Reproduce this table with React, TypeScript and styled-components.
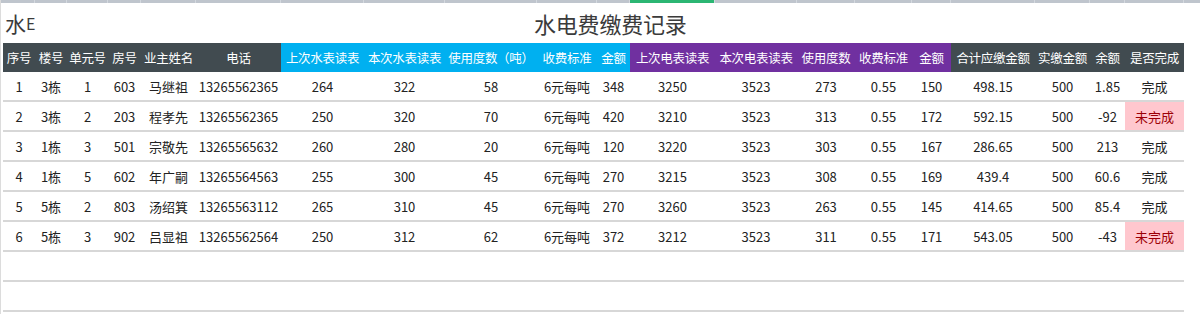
import React from 'react';
import styled, {createGlobalStyle} from 'styled-components';

type Tone = 'dark' | 'blue' | 'purple';

const colWidths = [32, 32, 41, 33, 55, 85, 83, 81, 92, 60, 33, 85, 82, 58, 57, 39, 84, 55, 35, 59];
const gridTemplate = colWidths.map(w => `${w}px`).join(' ');

const headers: [string, Tone][] = [
    ['序号', 'dark'], ['楼号', 'dark'], ['单元号', 'dark'], ['房号', 'dark'], ['业主姓名', 'dark'], ['电话', 'dark'],
    ['上次水表读表', 'blue'], ['本次水表读表', 'blue'], ['使用度数（吨）', 'blue'], ['收费标准', 'blue'], ['金额', 'blue'],
    ['上次电表读表', 'purple'], ['本次电表读表', 'purple'], ['使用度数', 'purple'], ['收费标准', 'purple'], ['金额', 'purple'],
    ['合计应缴金额', 'dark'], ['实缴金额', 'dark'], ['余额', 'dark'], ['是否完成', 'dark'],
];

const rows: string[][] = [
    ['1', '3栋', '1', '603', '马继祖', '13265562365', '264', '322', '58', '6元每吨', '348', '3250', '3523', '273', '0.55', '150', '498.15', '500', '1.85', '完成'],
    ['2', '3栋', '2', '203', '程孝先', '13265562365', '250', '320', '70', '6元每吨', '420', '3210', '3523', '313', '0.55', '172', '592.15', '500', '-92', '未完成'],
    ['3', '1栋', '3', '501', '宗敬先', '13265565632', '260', '280', '20', '6元每吨', '120', '3220', '3523', '303', '0.55', '167', '286.65', '500', '213', '完成'],
    ['4', '1栋', '5', '602', '年广嗣', '13265564563', '255', '300', '45', '6元每吨', '270', '3215', '3523', '308', '0.55', '169', '439.4', '500', '60.6', '完成'],
    ['5', '5栋', '2', '803', '汤绍箕', '13265563112', '265', '310', '45', '6元每吨', '270', '3260', '3523', '263', '0.55', '145', '414.65', '500', '85.4', '完成'],
    ['6', '5栋', '3', '902', '吕显祖', '13265562564', '250', '312', '62', '6元每吨', '372', '3212', '3523', '311', '0.55', '171', '543.05', '500', '-43', '未完成'],
];

const toneColors: Record<Tone, string> = {
    dark: '#414b50',
    blue: '#00b0f0',
    purple: '#7030a0',
};

const App: React.FC = () => {
    return (
        <Sheet>
            <GlobalStyle/>
            <Ruler>
                {colWidths.map((_, i) => (
                    <RulerCell key={i} $active={i === 11}/>
                ))}
            </Ruler>
            <TitleBar>
                <Corner>水<small>E</small></Corner>
                <Heading>水电费缴费记录</Heading>
            </TitleBar>
            <Grid>
                {headers.map(([label, tone], i) => (
                    <HeadCell key={i} $tone={tone}>{label}</HeadCell>
                ))}
                {rows.map((row, r) =>
                    row.map((value, c) => (
                        <Cell key={`${r}-${c}`} $alert={value === '未完成'}>{value}</Cell>
                    ))
                )}
                <EmptyRow/>
                <EmptyRow/>
            </Grid>
        </Sheet>
    )
};

export default App

const GlobalStyle = createGlobalStyle`
  body {
    margin: 0;
    background: #fff;
    font-family: "Noto Sans CJK SC", "Noto Sans", sans-serif;
  }
`;

const Sheet = styled.div`
  width: 1200px;
  height: 314px;
  overflow: hidden;
  background: #fff;
  border-left: 1px solid #dcdcdc;
  box-sizing: border-box;
`;

const Ruler = styled.div`
  display: grid;
  grid-template-columns: ${gridTemplate} 1fr;
  height: 3px;
  padding-left: 2px;
  background: #bfc5cd;
`;

const RulerCell = styled.div<{$active?: boolean}>`
  border-right: 1px solid #d3d8de;
  background: ${p => p.$active ? '#2bb673' : 'transparent'};
`;

const TitleBar = styled.div`
  display: flex;
  align-items: center;
  height: 40px;
  color: #3b3b3b;
`;

const Corner = styled.div`
  width: 529px;
  padding-left: 4px;
  font-size: 21px;
  line-height: 1;

  small {
    font-size: 16px;
    vertical-align: 2px;
  }
`;

const Heading = styled.h1`
  margin: 0;
  font-size: 22px;
  font-weight: 400;
  letter-spacing: -0.2px;
`;

const Grid = styled.div`
  display: grid;
  grid-template-columns: ${gridTemplate};
  margin-left: 2px;
`;

const HeadCell = styled.div<{$tone: Tone}>`
  display: flex;
  align-items: center;
  justify-content: center;
  height: 29px;
  background: ${p => toneColors[p.$tone]};
  color: #fff;
  font-size: 12.5px;
  white-space: nowrap;
  letter-spacing: -0.3px;
`;

const Cell = styled.div<{$alert?: boolean}>`
  display: flex;
  align-items: center;
  justify-content: center;
  height: 28px;
  border-bottom: 2px solid #d7d7d7;
  background: ${p => p.$alert ? '#ffc7ce' : '#fff'};
  color: ${p => p.$alert ? '#9c0006' : '#222'};
  font-size: 13px;
  white-space: nowrap;
`;

const EmptyRow = styled.div`
  grid-column: 1 / -1;
  height: 28px;
  border-bottom: 2px solid #d7d7d7;
`;
